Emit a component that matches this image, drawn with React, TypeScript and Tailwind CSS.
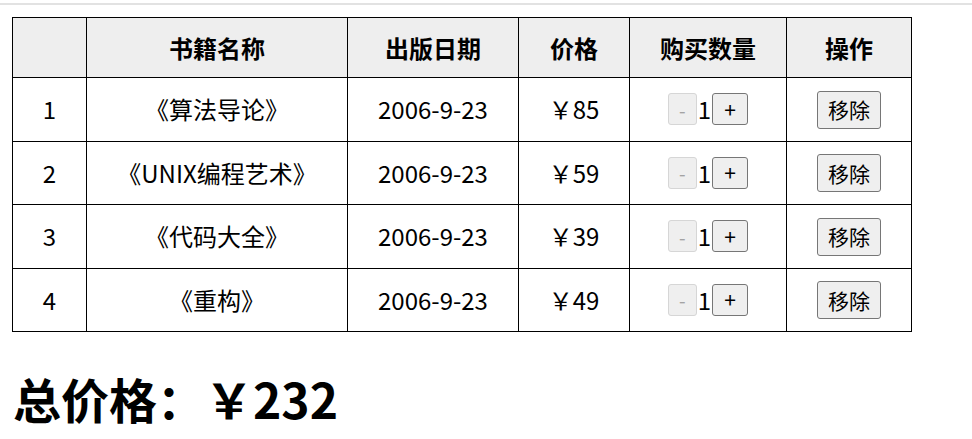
const books = [
  { id: 1, name: "《算法导论》", date: "2006-9-23", price: 85, count: 1 },
  { id: 2, name: "《UNIX编程艺术》", date: "2006-9-23", price: 59, count: 1 },
  { id: 3, name: "《代码大全》", date: "2006-9-23", price: 39, count: 1 },
  { id: 4, name: "《重构》", date: "2006-9-23", price: 49, count: 1 },
];

const font = { fontFamily: '"Noto Sans CJK SC", "Noto Sans", sans-serif' };

export default function App() {
  const total = books.reduce((sum, b) => sum + b.price * b.count, 0);

  return (
    <div className="bg-white w-[972px] h-[439px] overflow-hidden text-black" style={font}>
      <div className="mt-[3px] h-[2px] bg-[#e2e2e2]" />
      <table className="ml-[12px] mt-[12px] border-collapse border border-black text-[24px]">
        <thead>
          <tr className="bg-[#eeeeee] h-[60px]">
            <th className="w-[74px] border border-black"></th>
            <th className="w-[261px] border border-black font-bold">书籍名称</th>
            <th className="w-[171px] border border-black font-bold">出版日期</th>
            <th className="w-[111px] border border-black font-bold">价格</th>
            <th className="w-[157px] border border-black font-bold">购买数量</th>
            <th className="w-[125px] border border-black font-bold">操作</th>
          </tr>
        </thead>
        <tbody>
          {books.map((b) => (
            <tr key={b.id} className="h-[63.5px] text-center">
              <td className="border border-black">{b.id}</td>
              <td className="border border-black">{b.name}</td>
              <td className="border border-black">{b.date}</td>
              <td className="border border-black">￥{b.price}</td>
              <td className="border border-black">
                <div className="flex items-center justify-center">
                  <button
                    disabled
                    className="box-border w-[29px] h-[32px] rounded-[3px] border border-[#d6d6d6] bg-[#efefef] text-[19px] text-[#a3a3a3] leading-none"
                  >
                    -
                  </button>
                  <span className="leading-none px-[1px]">{b.count}</span>
                  <button className="box-border w-[36px] h-[32px] rounded-[3px] border border-[#767676] bg-[#efefef] text-[21px] leading-none">
                    +
                  </button>
                </div>
              </td>
              <td className="border border-black">
                <button className="box-border w-[64px] h-[38px] rounded-[3px] border border-[#767676] bg-[#efefef] text-[21px] leading-none">
                  移除
                </button>
              </td>
            </tr>
          ))}
        </tbody>
      </table>
      <h2 className="ml-[13px] mt-[42px] text-[48px] font-bold leading-none">总价格：￥{total}</h2>
    </div>
  );
}
